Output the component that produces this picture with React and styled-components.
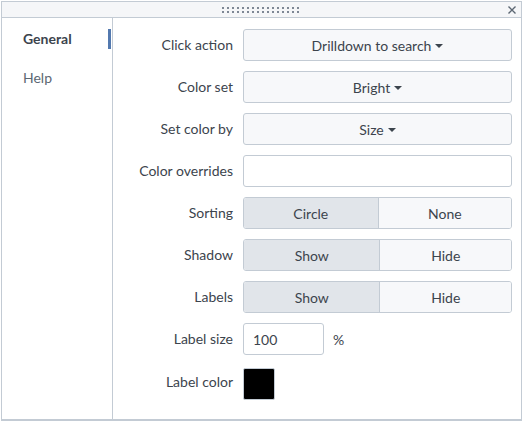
import React from "react";
import styled, { createGlobalStyle } from "styled-components";

const Global = createGlobalStyle`
  html, body { margin: 0; padding: 0; background: #ffffff; }
  body { font-family: Lato, "Open Sans", sans-serif; color: #3c444d; }
  * { box-sizing: border-box; }
`;

const Page = styled.div`
  padding: 1px;
`;

const Frame = styled.div`
  width: 521px;
  height: 420px;
  border: 1px solid #c3cbd4;
  border-bottom-width: 2px;
  display: flex;
  flex-direction: column;
  background: #fff;
`;

const Header = styled.div`
  height: 16px;
  flex: none;
  background: #f5f6f8;
  border-bottom: 1px solid #c3cbd4;
  display: flex;
  align-items: center;
  justify-content: center;
  position: relative;
`;

const Grip = styled.div`
  display: grid;
  grid-template-columns: repeat(16, 2px);
  grid-auto-rows: 2px;
  column-gap: 3px;
  row-gap: 2px;
  margin-right: 3px;
  margin-top: 1px;
`;

const Dot = styled.span`
  width: 2px;
  height: 2px;
  background: #7e8794;
`;

const Close = styled.button`
  position: absolute;
  right: 4px;
  top: 3px;
  width: 10px;
  height: 10px;
  padding: 0;
  border: 0;
  background: none;
  display: flex;
  align-items: center;
  justify-content: center;
  cursor: pointer;
`;

const Body = styled.div`
  flex: 1;
  display: flex;
  min-height: 0;
`;

const Sidebar = styled.nav`
  width: 111px;
  flex: none;
  border-right: 1px solid #c3cbd4;
  padding-top: 11px;
  display: flex;
  flex-direction: column;
  gap: 19px;
`;

const NavItem = styled.div`
  height: 20px;
  line-height: 19px;
  padding-left: 21px;
  font-size: 14px;
  font-weight: ${(p) => (p.$active ? 700 : 400)};
  color: ${(p) => (p.$active ? "#3c444d" : "#5c6773")};
  border-right: 3px solid ${(p) => (p.$active ? "#5379af" : "transparent")};
  margin-right: 1px;
`;

const Main = styled.div`
  flex: 1;
  padding: 11px 9px 0 0;
  display: flex;
  flex-direction: column;
  gap: 10px;
`;

const Row = styled.div`
  display: grid;
  grid-template-columns: 120px 1fr;
  column-gap: 10px;
  align-items: center;
  min-height: 32px;
`;

const Label = styled.div`
  text-align: right;
  font-size: 14px;
  color: #3c444d;
  line-height: 20px;
  margin-top: -1px;
`;

const Select = styled.button`
  height: 32px;
  width: 100%;
  border: 1px solid #c3cbd4;
  border-radius: 3px;
  background: #f7f8fa;
  font-family: inherit;
  font-size: 14px;
  color: #3c444d;
  display: flex;
  align-items: center;
  justify-content: center;
  gap: 4px;
  padding: 0 8px;
`;

const Caret = styled.span`
  width: 0;
  height: 0;
  border-left: 4px solid transparent;
  border-right: 4px solid transparent;
  border-top: 4px solid #3c444d;
  margin-top: 1px;
`;

const TextInput = styled.div`
  height: 32px;
  width: ${(p) => p.$width || "100%"};
  border: 1px solid #c3cbd4;
  border-radius: 3px;
  background: #fff;
  font-size: 14px;
  color: #3c444d;
  display: flex;
  align-items: center;
  padding: 0 9px;
`;

const Group = styled.div`
  display: flex;
  height: 32px;
  border: 1px solid #c3cbd4;
  border-radius: 3px;
  overflow: hidden;
`;

const Seg = styled.div`
  flex: 1 1 auto;
  display: flex;
  align-items: center;
  justify-content: center;
  font-size: 14px;
  color: #3c444d;
  background: ${(p) => (p.$selected ? "#e1e5ea" : "#f7f8fa")};
  & + & {
    border-left: 1px solid #c3cbd4;
  }
`;

const Inline = styled.div`
  display: flex;
  align-items: center;
  gap: 9px;
`;

const Unit = styled.span`
  font-size: 14px;
  color: #3c444d;
`;

const Swatch = styled.div`
  width: 32px;
  height: 32px;
  margin-top: 3px;
  background: #000;
  border: 1px solid #c3cbd4;
  border-radius: 2px;
`;

const SelectRow = ({ label, value }) => (
  <Row>
    <Label>{label}</Label>
    <Select>
      {value}
      <Caret />
    </Select>
  </Row>
);

const ToggleRow = ({ label, options, selected }) => (
  <Row>
    <Label>{label}</Label>
    <Group>
      {options.map((o) => (
        <Seg key={o} $selected={o === selected}>
          {o}
        </Seg>
      ))}
    </Group>
  </Row>
);

export default function App() {
  return (
    <Page>
      <Global />
      <Frame>
        <Header>
          <Grip>
            {Array.from({ length: 32 }).map((_, i) => (
              <Dot key={i} />
            ))}
          </Grip>
          <Close aria-label="Close">
            <svg width="8" height="8" viewBox="0 0 8 8">
              <path d="M0.5 0.5 L7.5 7.5 M7.5 0.5 L0.5 7.5" stroke="#5c6773" strokeWidth="1.4" />
            </svg>
          </Close>
        </Header>
        <Body>
          <Sidebar>
            <NavItem $active>General</NavItem>
            <NavItem>Help</NavItem>
          </Sidebar>
          <Main>
            <SelectRow label="Click action" value="Drilldown to search" />
            <SelectRow label="Color set" value="Bright" />
            <SelectRow label="Set color by" value="Size" />
            <Row>
              <Label>Color overrides</Label>
              <TextInput />
            </Row>
            <ToggleRow label="Sorting" options={["Circle", "None"]} selected="Circle" />
            <ToggleRow label="Shadow" options={["Show", "Hide"]} selected="Show" />
            <ToggleRow label="Labels" options={["Show", "Hide"]} selected="Show" />
            <Row>
              <Label>Label size</Label>
              <Inline>
                <TextInput $width="81px">100</TextInput>
                <Unit>%</Unit>
              </Inline>
            </Row>
            <Row>
              <Label>Label color</Label>
              <Swatch />
            </Row>
          </Main>
        </Body>
      </Frame>
    </Page>
  );
}
